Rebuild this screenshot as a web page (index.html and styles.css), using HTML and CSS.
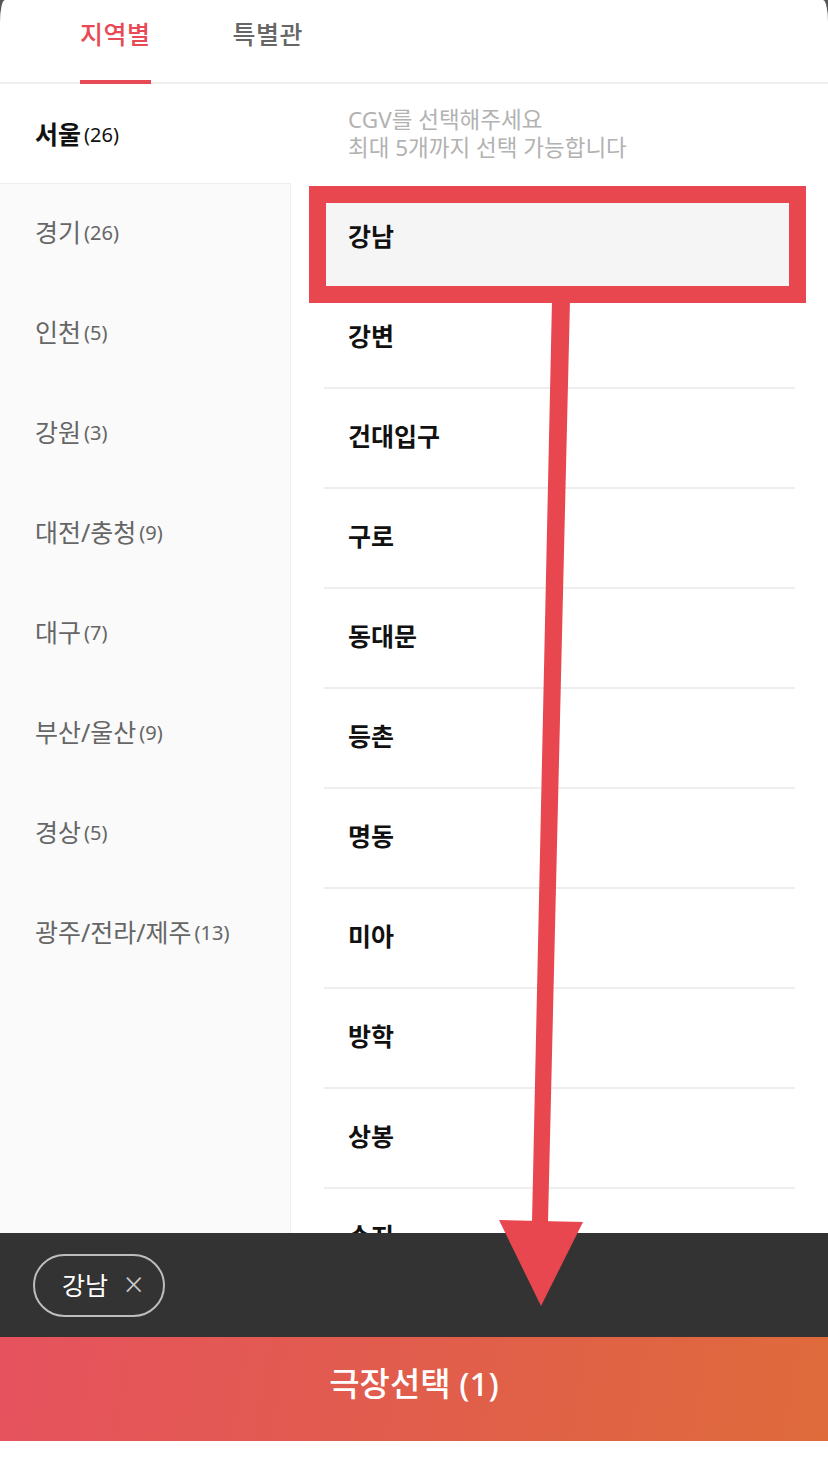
FILE: index.html
```html
<!DOCTYPE html>
<html lang="ko">
<head>
<meta charset="utf-8">
<title>극장선택</title>
<link rel="stylesheet" href="styles.css">
</head>
<body>
<div class="sheet">
  <nav class="tabs">
    <span class="tab active">지역별</span>
    <span class="tab">특별관</span>
  </nav>
  <div class="main">
    <div class="regions">
      <div class="region active">서울<span class="count">(26)</span></div>
      <div class="region-rest">
        <div class="region">경기<span class="count">(26)</span></div>
        <div class="region">인천<span class="count">(5)</span></div>
        <div class="region">강원<span class="count">(3)</span></div>
        <div class="region">대전/충청<span class="count">(9)</span></div>
        <div class="region">대구<span class="count">(7)</span></div>
        <div class="region">부산/울산<span class="count">(9)</span></div>
        <div class="region">경상<span class="count">(5)</span></div>
        <div class="region">광주/전라/제주<span class="count">(13)</span></div>
      </div>
    </div>
    <div class="cinemas">
      <p class="hint">CGV를 선택해주세요<br>최대 5개까지 선택 가능합니다</p>
      <ul class="list">
        <li class="item selected">강남</li>
        <li class="item">강변</li>
        <li class="item">건대입구</li>
        <li class="item">구로</li>
        <li class="item">동대문</li>
        <li class="item">등촌</li>
        <li class="item">명동</li>
        <li class="item">미아</li>
        <li class="item">방학</li>
        <li class="item">상봉</li>
        <li class="item">수지</li>
      </ul>
    </div>
  </div>
  <div class="picked">
    <span class="chip">강남<span class="chip-x">×</span></span>
  </div>
  <button class="confirm">극장선택 (1)</button>
  <div class="annot-box"></div>
  <svg class="annot-arrow" width="828" height="1463" viewBox="0 0 828 1463">
    <polygon points="552,300 570,300 548,1222 532,1222" fill="#e9474f"/>
    <polygon points="499,1220 583,1222 541,1306" fill="#e9474f"/>
  </svg>
</div>
</body>
</html>
```
FILE: styles.css
```css
* { box-sizing: border-box; }
html { background: #555; }
body {
  margin: 0;
  font-family: "Noto Sans", "Noto Sans CJK KR", sans-serif;
}
.sheet {
  position: relative;
  background: #fff;
  width: 828px;
  height: 1463px;
  border-top-left-radius: 5px 22px;
  border-top-right-radius: 5px 22px;
  overflow: hidden;
}
.tabs {
  display: flex;
  gap: 82px;
  padding-left: 80px;
  height: 84px;
  border-bottom: 2px solid #eee;
}
.tab {
  font-size: 25px;
  font-weight: 500;
  color: #666;
  line-height: 1;
  padding-top: 22px;
  height: 82px;
  letter-spacing: 0.5px;
}
.tab.active {
  color: #e84a55;
  border-bottom: 4px solid #e84a55;
  height: 84px;
}
.main {
  display: flex;
  height: 1149px;
  overflow: hidden;
}
.regions {
  width: 291px;
  display: flex;
  flex-direction: column;
}
.region {
  height: 100px;
  display: flex;
  align-items: center;
  padding: 0 0 6px 35px;
  font-size: 25px;
  color: #666;
}
.region.active {
  height: 99px;
  color: #111;
  font-weight: 700;
  padding-bottom: 2px;
}
.count {
  font-size: 20px;
  font-weight: 400;
  margin-left: 3px;
  padding-top: 3px;
}
.region-rest {
  flex: 1;
  background: #fafafa;
  border-top: 1px solid #eee;
  border-right: 1px solid #eee;
}
.cinemas {
  flex: 1;
  padding: 0 33px;
}
.hint {
  margin: 0;
  padding: 22px 0 0 24px;
  height: 105px;
  font-size: 22.5px;
  line-height: 28px;
  color: #b2b2b2;
}
.list {
  list-style: none;
  margin: 0;
  padding: 0;
}
.item {
  height: 100px;
  display: flex;
  align-items: center;
  padding: 0 0 6px 24px;
  font-size: 25px;
  font-weight: 700;
  color: #111;
  border-bottom: 2px solid #eee;
}
.item.selected { background: #f5f5f5; }
.picked {
  height: 104px;
  background: #333;
  display: flex;
  align-items: center;
  padding-left: 33px;
}
.chip {
  display: inline-flex;
  align-items: center;
  height: 63px;
  width: 132px;
  padding: 0 0 2px 27px;
  border: 2px solid #bdbdbd;
  border-radius: 32px;
  color: #fff;
  font-size: 25px;
}
.chip-x {
  color: #c8c8c8;
  font-size: 34px;
  font-weight: 300;
  margin-left: 16px;
}
.confirm {
  display: block;
  width: 100%;
  height: 104px;
  border: 0;
  margin: 0;
  background: linear-gradient(100deg, #e6525e 0%, #e15d4c 50%, #df6b3b 100%);
  color: #fff;
  font-family: "Noto Sans", "Noto Sans CJK KR", sans-serif;
  font-size: 33px;
  font-weight: 500;
  padding-bottom: 16px;
}
.annot-box {
  position: absolute;
  left: 309px;
  top: 186px;
  width: 497px;
  height: 117px;
  border: 17px solid #e9474f;
}
.annot-arrow {
  position: absolute;
  left: 0;
  top: 0;
  pointer-events: none;
}
```
